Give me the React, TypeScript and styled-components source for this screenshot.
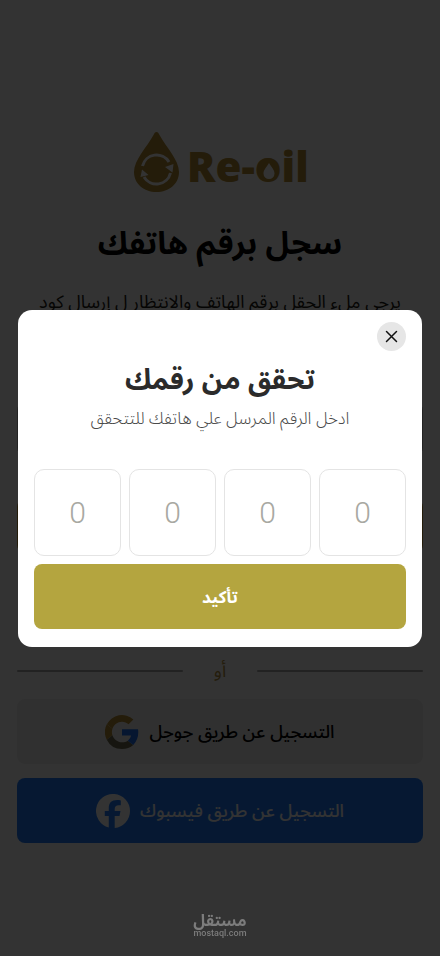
import React from "react";
import styled, { createGlobalStyle } from "styled-components";

const Global = createGlobalStyle`
  *, *::before, *::after { box-sizing: border-box; }
  body { margin: 0; background: #ffffff; font-family: "Noto Sans Arabic", "Noto Sans", "DejaVu Sans", sans-serif; }
  button, input { font-family: inherit; }
`;

const Screen = styled.div`
  display: flex;
  flex-direction: column;
  min-height: 100vh;
  padding: 130px 17px 16px;
`;

const Brand = styled.div`
  display: flex;
  justify-content: center;
  svg { width: 176px; height: 64px; overflow: visible; }
`;

const PageTitle = styled.h1`
  margin: 22px 0 0;
  font-size: 32px;
  line-height: 56px;
  font-weight: 700;
  text-align: center;
  color: #000000;
`;

const PageText = styled.p`
  margin: 16px 0 0;
  font-size: 18px;
  line-height: 28px;
  text-align: center;
  color: #1d1b14;
`;

const PhoneForm = styled.form`
  display: flex;
  flex-direction: column;
  gap: 43px;
  margin-top: 86px;
`;

const PhoneInput = styled.input`
  width: 100%;
  height: 54px;
  border: 1px solid #b0b0b0;
  border-radius: 8px;
  background: #ffffff;
  padding: 0 16px;
  font-size: 18px;
`;

const SendButton = styled.button`
  width: 100%;
  height: 54px;
  border: 0;
  border-radius: 8px;
  background: #b48c32;
`;

const Divider = styled.div`
  display: flex;
  align-items: center;
  gap: 31px;
  margin-top: 102px;
  height: 32px;
  color: #b48f3c;
  font-size: 18px;
  line-height: 32px;
  &::before, &::after { content: ""; flex: 1; height: 2px; border-radius: 1px; background: #a8a8a8; }
`;

const SocialList = styled.div`
  display: flex;
  flex-direction: column;
  gap: 14px;
  margin-top: 12px;
`;

const SocialButton = styled.button<{ $brand: "google" | "facebook" }>`
  display: flex;
  align-items: center;
  justify-content: center;
  gap: 10px;
  width: 100%;
  height: 65px;
  border: 0;
  border-radius: 8px;
  font-size: 18px;
  font-weight: 500;
  line-height: 28px;
  background: ${(p) => (p.$brand === "google" ? "#f0f0f0" : "#1f7bfa")};
  color: ${(p) => (p.$brand === "google" ? "#000000" : "#ffffff")};
  svg { width: 34px; height: 34px; }
`;

const Overlay = styled.div`
  position: fixed;
  inset: 0;
  display: flex;
  align-items: center;
  justify-content: center;
  padding: 0 18px;
  background: rgba(0, 0, 0, 0.8);
`;

const Dialog = styled.section`
  display: flex;
  flex-direction: column;
  width: 100%;
  padding: 12px 16px 18px;
  border-radius: 14px;
  background: #ffffff;
`;

const CloseButton = styled.button`
  display: grid;
  place-items: center;
  align-self: flex-start;
  width: 29px;
  height: 29px;
  padding: 0;
  border: 0;
  border-radius: 50%;
  background: #e6e6e6;
  color: #111111;
  svg { width: 13px; height: 13px; }
`;

const DialogTitle = styled.h2`
  margin: 10px 0 0;
  font-size: 28px;
  line-height: 40px;
  font-weight: 700;
  text-align: center;
  color: #2b2b2b;
`;

const DialogText = styled.p`
  margin: 4px 0 0;
  font-size: 17px;
  font-weight: 300;
  line-height: 28px;
  text-align: center;
  color: #4a4a4a;
`;

const CodeForm = styled.form`
  display: flex;
  flex-direction: column;
  gap: 8px;
  margin-top: 36px;
`;

const CodeRow = styled.div`
  display: grid;
  grid-template-columns: repeat(4, 1fr);
  gap: 8px;
`;

const CodeInput = styled.input`
  width: 100%;
  aspect-ratio: 1;
  min-width: 0;
  padding: 0;
  border: 1px solid #e4e4e4;
  border-radius: 10px;
  background: #ffffff;
  font-family: Roboto, "Noto Sans", sans-serif;
  font-size: 30px;
  font-weight: 300;
  text-align: center;
  &::placeholder { color: #a8a8a2; opacity: 1; }
`;

const ConfirmButton = styled.button`
  height: 65px;
  padding: 4px 0 0;
  border: 0;
  border-radius: 8px;
  background: #b4a53f;
  color: #ffffff;
  font-size: 17px;
  font-weight: 700;
`;

const Watermark = styled.footer`
  position: fixed;
  left: 0;
  right: 0;
  bottom: 18px;
  display: flex;
  flex-direction: column;
  align-items: center;
  color: #7c7c7c;
  pointer-events: none;
`;

const WatermarkName = styled.span`
  font-size: 16px;
  line-height: 14px;
  font-weight: 700;
`;

const WatermarkSite = styled.span`
  font-family: Roboto, sans-serif;
  font-size: 9px;
  line-height: 10px;
  font-weight: 500;
`;

const Logo = () => (
  <svg viewBox="0 0 176 64" role="img" aria-label="Re-oil" direction="ltr">
    <path d="M24.500 2C23 2 22.500 3 21.500 5C15 17 2 30 2 42C2 54 12 62 24.500 62S47 54 47 42C47 30 34 17 27.500 5C26.500 3 26 2 24.500 2Z" fill="#b48c32" />
    <path d="M10.500 36A14.500 14.500 0 0 1 37 32M38.500 43A14.500 14.500 0 0 1 12 47" fill="none" stroke="#ffffff" strokeWidth="3" />
    <path d="M41.500 34L40.500 42.500L33 37ZM8.500 47L10 39.500L16.500 45Z" fill="#ffffff" />
    <text x="55" y="52" fontFamily="Open Sans" fontWeight="800" fontSize="42" fill="#b48c32">Re-oil</text>
    <ellipse cx="137" cy="41" rx="8" ry="9" fill="#b48c32" />
    <path d="M137 33C134 38 131.500 40 131.500 43.500A5.500 5.500 0 0 0 142.500 43.500C142.500 40 140 38 137 33Z" fill="#ffffff" />
  </svg>
);

const GoogleIcon = () => (
  <svg viewBox="0 0 48 48" aria-hidden="true">
    <path fill="#b48c32" d="M24 9.500c3.500 0 6.700 1.200 9.200 3.600l6.900-6.900A24 24 0 0 0 2.600 13.200l8 6.200C12.400 13.700 17.700 9.500 24 9.500Z" />
    <path fill="#b48c32" d="M10.500 28.600a14.500 14.500 0 0 1 0-9.200l-8-6.200a24 24 0 0 0 0 21.600Z" />
    <path fill="#706c50" d="M24 48c6.500 0 11.900-2.100 15.900-5.800l-7.700-6c-2.200 1.500-4.900 2.300-8.200 2.300-6.300 0-11.600-4.200-13.500-9.900l-8 6.200A24 24 0 0 0 24 48Z" />
    <path fill="#1f6ff0" d="M47 24.500c0-1.600-.2-3.100-.4-4.500H24v9h12.900a11 11 0 0 1-4.700 7.200l7.700 6C44.400 38 47 31.800 47 24.500Z" />
  </svg>
);

const FacebookIcon = () => (
  <svg viewBox="0 0 24 24" aria-hidden="true">
    <path fill="#ffffff" d="M24 12a12 12 0 1 0-15 11.620V15.600H6.200V12H9V10.300C9 6.200 10.900 4.300 14.900 4.300c.8 0 2 .1 2.600.3v3.300c-.3 0-.8 0-1.400 0-2 0-2.900.8-2.900 2.800V12h4.100l-.7 3.600h-3.400v8.340A12 12 0 0 0 24 12Z" />
  </svg>
);

const CloseIcon = () => (
  <svg viewBox="0 0 13 13" aria-hidden="true">
    <path d="M1.500 1.500 11.500 11.500M11.500 1.500 1.500 11.500" stroke="currentColor" strokeWidth="1.500" strokeLinecap="round" />
  </svg>
);

export default function App() {
  return (
    <>
      <Global />
      <Screen dir="rtl" lang="ar">
        <Brand><Logo /></Brand>
        <PageTitle>سجل برقم هاتفك</PageTitle>
        <PageText>يرجى ملء الحقل برقم الهاتف والانتظار ل إرسال كود</PageText>
        <PhoneForm>
          <PhoneInput type="tel" aria-label="رقم الهاتف" />
          <SendButton type="button" aria-label="إرسال" />
        </PhoneForm>
        <Divider>أو</Divider>
        <SocialList>
          <SocialButton type="button" $brand="google">التسجيل عن طريق جوجل<GoogleIcon /></SocialButton>
          <SocialButton type="button" $brand="facebook">التسجيل عن طريق فيسبوك<FacebookIcon /></SocialButton>
        </SocialList>
      </Screen>
      <Overlay dir="rtl" lang="ar">
        <Dialog role="dialog" aria-modal="true" aria-labelledby="verify-title">
          <CloseButton type="button" aria-label="إغلاق"><CloseIcon /></CloseButton>
          <DialogTitle id="verify-title">تحقق من رقمك</DialogTitle>
          <DialogText>ادخل الرقم المرسل علي هاتفك للتتحقق</DialogText>
          <CodeForm>
            <CodeRow>
              {[1, 2, 3, 4].map((n) => (
                <CodeInput key={n} inputMode="numeric" maxLength={1} placeholder="0" aria-label={`الرقم ${n}`} />
              ))}
            </CodeRow>
            <ConfirmButton type="button">تأكيد</ConfirmButton>
          </CodeForm>
        </Dialog>
      </Overlay>
      <Watermark>
        <WatermarkName lang="ar">مستقل</WatermarkName>
        <WatermarkSite>mostaql.com</WatermarkSite>
      </Watermark>
    </>
  );
}
